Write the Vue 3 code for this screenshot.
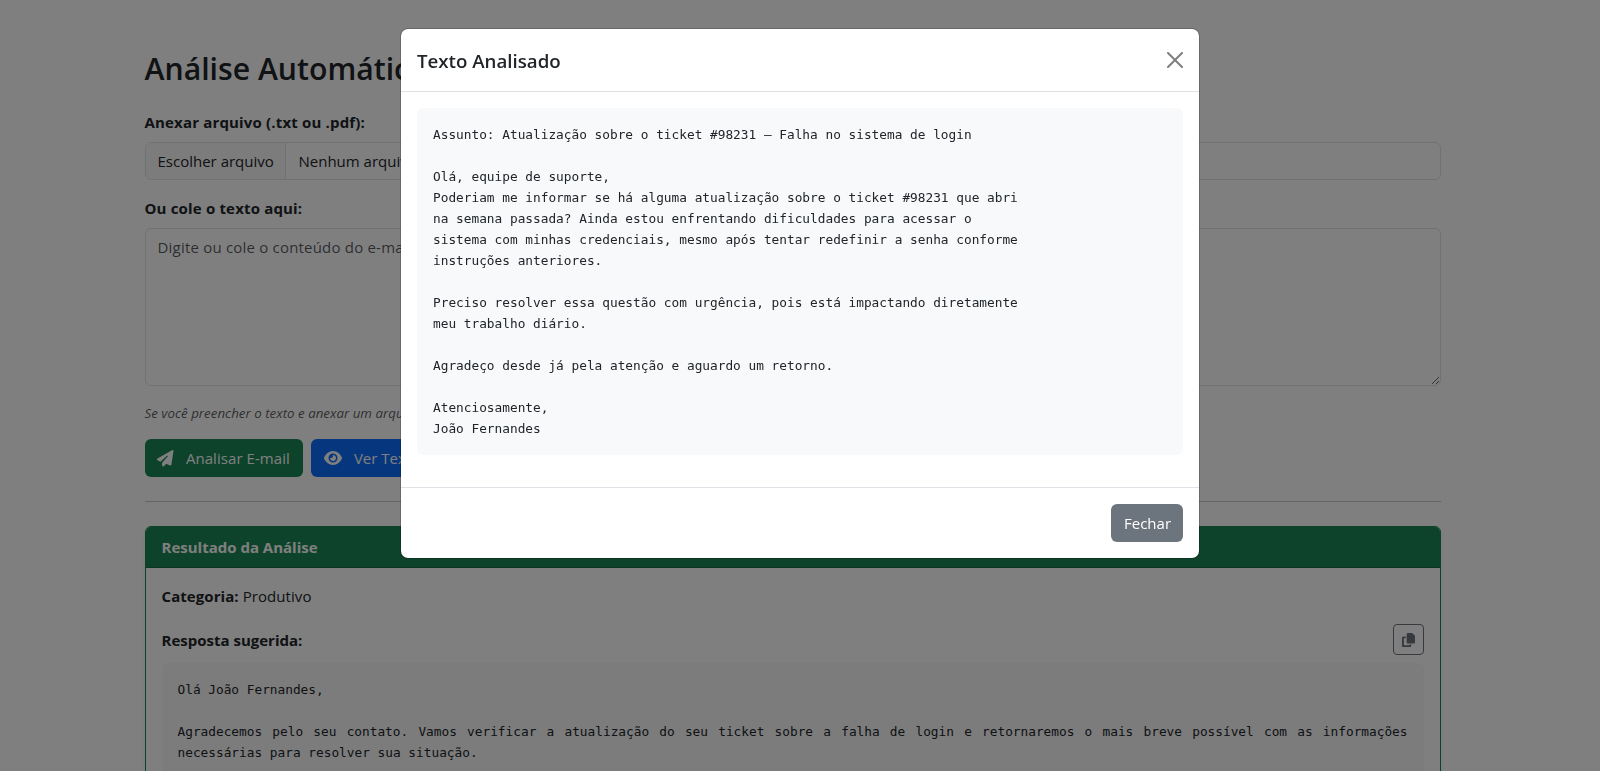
<script setup>
const analyzedText = `Assunto: Atualização sobre o ticket #98231 – Falha no sistema de login

Olá, equipe de suporte,
Poderiam me informar se há alguma atualização sobre o ticket #98231 que abri
na semana passada? Ainda estou enfrentando dificuldades para acessar o
sistema com minhas credenciais, mesmo após tentar redefinir a senha conforme
instruções anteriores.

Preciso resolver essa questão com urgência, pois está impactando diretamente
meu trabalho diário.

Agradeço desde já pela atenção e aguardo um retorno.

Atenciosamente,
João Fernandes`

const reply = `Olá João Fernandes,

Agradecemos pelo seu contato. Vamos verificar a atualização do seu ticket sobre a falha de login e retornaremos o mais breve possível com as informações necessárias para resolver sua situação.`
</script>

<template>
  <div class="page">
    <main class="container">
      <h1 class="title">Análise Automática</h1>

      <label class="label">Anexar arquivo (.txt ou .pdf):</label>
      <div class="file">
        <span class="file-btn">Escolher arquivo</span>
        <span class="file-name">Nenhum arquivo</span>
      </div>

      <label class="label">Ou cole o texto aqui:</label>
      <textarea class="area" placeholder="Digite ou cole o conteúdo do e-mail"></textarea>

      <p class="hint">Se você preencher o texto e anexar um arquivo</p>

      <div class="actions">
        <button class="btn green">
          <svg class="icon" width="16.5" height="16.5" viewBox="0 0 512 512"><path d="M498.1 5.6c10.1 7 15.4 19.1 13.5 31.2l-64 416c-1.5 9.7-7.4 18.2-16 23s-18.9 5.4-28 1.6L284 427.7l-68.5 74.1c-8.9 9.7-22.9 12.9-35.2 8.1S160 493.2 160 480V396.4c0-4 1.5-7.8 4.2-10.7L331.8 202.8c5.8-6.3 5.6-16-.4-22s-15.7-6.4-22-.7L106 360.8 17.7 316.6C7.1 311.3 .3 300.7 0 288.9s5.9-22.8 16.1-28.7l448-256c10.7-6.1 23.9-5.5 34 1.4z" /></svg>
          <span>Analisar E-mail</span>
        </button>
        <button class="btn blue">
          <svg class="icon" width="18" height="16" viewBox="0 0 576 512"><path d="M288 32c-80.8 0-145.5 36.8-192.6 80.6C48.6 156 17.3 208 2.5 243.7c-3.3 7.9-3.3 16.7 0 24.6C17.3 304 48.6 356 95.4 399.4C142.5 443.2 207.2 480 288 480s145.5-36.8 192.6-80.6c46.8-43.5 78.1-95.4 93-131.1c3.3-7.9 3.3-16.7 0-24.6c-14.9-35.7-46.2-87.7-93-131.1C433.5 68.8 368.8 32 288 32zM144 256a144 144 0 1 1 288 0 144 144 0 1 1 -288 0zm144-64c0 35.3-28.7 64-64 64c-7.1 0-13.9-1.2-20.3-3.3c-5.5-1.8-11.9 1.6-11.7 7.4c.3 6.9 1.3 13.8 3.2 20.7c13.7 51.2 66.4 81.6 117.6 67.9s81.6-66.4 67.9-117.6c-11.1-41.5-47.8-69.4-88.6-71.1c-5.8-.2-9.2 6.1-7.4 11.7c2.1 6.4 3.3 13.2 3.3 20.3z" /></svg>
          <span>Ver Texto</span>
        </button>
      </div>

      <hr class="rule" />

      <section class="card">
        <header class="card-head">Resultado da Análise</header>
        <div class="card-body">
          <p class="category"><strong>Categoria:</strong> Produtivo</p>
          <div class="reply-head">
            <strong>Resposta sugerida:</strong>
            <button class="copy" aria-label="Copiar">
              <svg width="13" height="14" viewBox="0 0 448 512" preserveAspectRatio="none"><path d="M208 0H332.1c12.7 0 24.9 5.1 33.9 14.1l67.9 67.9c9 9 14.1 21.2 14.1 33.9V336c0 26.5-21.5 48-48 48H208c-26.5 0-48-21.5-48-48V48c0-26.5 21.5-48 48-48zM48 128h80v64H64V448H256V416h64v48c0 26.5-21.5 48-48 48H48c-26.5 0-48-21.5-48-48V176c0-26.5 21.5-48 48-48z" /></svg>
            </button>
          </div>
          <pre class="mono justify">{{ reply }}</pre>
        </div>
      </section>
    </main>
  </div>

  <div class="backdrop">
    <div class="modal" role="dialog">
      <header class="modal-head">
        <h5 class="modal-title">Texto Analisado</h5>
        <button class="close" aria-label="Fechar janela">
          <svg width="16" height="16" viewBox="0 0 16 16"><path d="M.293.293a1 1 0 0 1 1.414 0L8 6.586 14.293.293a1 1 0 1 1 1.414 1.414L9.414 8l6.293 6.293a1 1 0 0 1-1.414 1.414L8 9.414l-6.293 6.293a1 1 0 0 1-1.414-1.414L6.586 8 .293 1.707a1 1 0 0 1 0-1.414z" /></svg>
        </button>
      </header>
      <div class="modal-body">
        <pre class="mono">{{ analyzedText }}</pre>
      </div>
      <footer class="modal-foot">
        <button class="btn gray">Fechar</button>
      </footer>
    </div>
  </div>
</template>

<style>
html,
body {
  margin: 0;
  height: 100%;
  overflow: hidden;
  background: #fff;
}
</style>

<style scoped>
* {
  box-sizing: border-box;
}
.page,
.backdrop {
  font-family: "Open Sans", "Noto Sans", sans-serif;
  font-size: 15px;
  line-height: 24px;
  color: #212529;
}
.page {
  height: 771px;
  padding: 48px 15px 0 0;
  overflow: hidden;
}
.container {
  width: 1320px;
  margin: 0 auto;
  padding: 0 12px;
}
.title {
  margin: 0 0 24px;
  padding-top: 4px;
  font-size: 30.2px;
  font-weight: 600;
  line-height: 34.4px;
}
.label {
  display: block;
  margin-bottom: 8px;
  font-weight: 700;
  letter-spacing: 0.17px;
}
.file {
  display: flex;
  height: 38px;
  border: 1px solid #dee2e6;
  border-radius: 6px;
  overflow: hidden;
  margin-bottom: 16px;
}
.file-btn {
  flex: none;
  width: 140px;
  padding: 6px 12px;
  background: #f8f9fa;
  border-right: 1px solid #dee2e6;
  white-space: nowrap;
}
.file-name {
  padding: 6px 13px;
}
.area {
  display: block;
  width: 100%;
  height: 158px;
  padding: 6px 12px;
  border: 1px solid #dee2e6;
  border-radius: 6px;
  background: #fff;
  font: inherit;
  letter-spacing: 0.2px;
  resize: vertical;
}
.area::placeholder {
  color: rgba(33, 37, 41, 0.75);
  opacity: 1;
}
.hint {
  margin: 17px 0 15px;
  font-size: 13.3px;
  line-height: 21px;
  font-style: italic;
  letter-spacing: 0.02px;
  color: rgba(33, 37, 41, 0.75);
}
.actions {
  display: flex;
  gap: 8px;
}
.btn {
  display: flex;
  align-items: center;
  gap: 12.4px;
  height: 38px;
  padding: 0 13px;
  border: 0;
  border-radius: 6px;
  color: #fff;
  font: inherit;
  white-space: nowrap;
}
.icon {
  flex: none;
  fill: currentColor;
}
.green {
  width: 158px;
  padding: 0 12.5px;
  background: #198754;
  letter-spacing: 0.06px;
}
.blue {
  background: #0d6efd;
}
.gray {
  width: 72px;
  background: #6c757d;
}
.rule {
  height: 1px;
  margin: 24px 0;
  border: 0;
  background: #212529;
  opacity: 0.25;
}
.card {
  border: 1px solid #198754;
  border-radius: 6px;
  box-shadow: 0 2px 4px rgba(0, 0, 0, 0.075);
}
.card-head {
  height: 41px;
  padding: 8px 16px;
  border-bottom: 1px solid rgba(0, 0, 0, 0.175);
  border-radius: 5px 5px 0 0;
  background: #198754;
  color: #fff;
  font-weight: 700;
}
.card-body {
  padding: 16px;
}
.category {
  margin: 0 0 16px;
  letter-spacing: 0.07px;
}
.reply-head {
  display: flex;
  align-items: center;
  justify-content: space-between;
  height: 31px;
  margin-bottom: 8px;
}
.copy {
  display: flex;
  align-items: center;
  justify-content: center;
  width: 31px;
  height: 31px;
  padding: 0;
  border: 1px solid #6c757d;
  border-radius: 4px;
  background: none;
}
.copy svg {
  fill: #6c757d;
}
.mono {
  margin: 0 0 16px;
  padding: 16px;
  border-radius: 6px;
  background: #f8f9fa;
  font-family: "DejaVu Sans Mono", monospace;
  font-size: 12.79px;
  line-height: 21px;
  white-space: pre-wrap;
}
.justify {
  text-align: justify;
}
.backdrop {
  position: fixed;
  inset: 0;
  padding-top: 28px;
  background: rgba(0, 0, 0, 0.5);
}
.modal {
  width: 800px;
  margin: 0 auto;
  border: 1px solid rgba(0, 0, 0, 0.175);
  border-radius: 8px;
  background: #fff;
  background-clip: padding-box;
}
.modal-head {
  display: flex;
  align-items: center;
  justify-content: space-between;
  height: 63px;
  padding: 0 16px;
  border-bottom: 1px solid #dee2e6;
}
.modal-title {
  margin: 0;
  padding-top: 1px;
  font-size: 18.7px;
  font-weight: 600;
  line-height: 30px;
}
.close {
  display: flex;
  padding: 0;
  border: 0;
  background: none;
  opacity: 0.5;
}
.modal-body {
  padding: 16px;
}
.modal-foot {
  display: flex;
  justify-content: flex-end;
  padding: 16px;
  border-top: 1px solid #dee2e6;
}
</style>
